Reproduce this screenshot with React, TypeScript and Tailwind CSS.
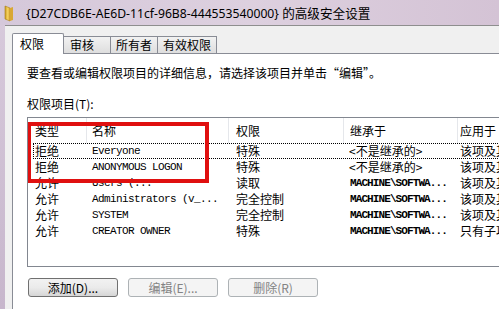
import React from "react";

const cjk = { fontFamily: '"Noto Sans CJK SC", "Noto Sans", sans-serif' };
const mono = { fontFamily: '"Liberation Mono", "Noto Sans CJK SC", monospace' };

type Row = { type: string; name: string; perm: string; inh: string; apply: string; mach?: boolean };

const rows: Row[] = [
  { type: "拒绝", name: "Everyone", perm: "特殊", inh: "<不是继承的>", apply: "该项及其子项" },
  { type: "拒绝", name: "ANONYMOUS LOGON", perm: "特殊", inh: "<不是继承的>", apply: "该项及其子项" },
  { type: "允许", name: "Users (...", perm: "读取", inh: "MACHINE\\SOFTWA...", apply: "该项及其子项", mach: true },
  { type: "允许", name: "Administrators (v_...", perm: "完全控制", inh: "MACHINE\\SOFTWA...", apply: "该项及其子项", mach: true },
  { type: "允许", name: "SYSTEM", perm: "完全控制", inh: "MACHINE\\SOFTWA...", apply: "该项及其子项", mach: true },
  { type: "允许", name: "CREATOR OWNER", perm: "特殊", inh: "MACHINE\\SOFTWA...", apply: "只有子项", mach: true },
];

function Folder() {
  return (
    <svg width="12" height="18" viewBox="0 0 12 18" className="shrink-0">
      <defs>
        <linearGradient id="fg" x1="0" y1="0" x2="1" y2="0">
          <stop offset="0" stopColor="#c89a22" />
          <stop offset="0.5" stopColor="#f3cf5c" />
          <stop offset="1" stopColor="#e0b03a" />
        </linearGradient>
      </defs>
      <path d="M2 2 L7 4 L7 17 L2 15 Z" fill="url(#fg)" stroke="#a77d14" strokeWidth="0.6" />
      <path d="M7 4 L10 3 L10 16 L7 17 Z" fill="#d9a834" />
    </svg>
  );
}

export default function App() {
  return (
    <div className="w-[499px] h-[309px] overflow-hidden flex flex-col bg-gradient-to-b from-[#d8cbdc] to-[#c7b6cc]">
      <div className="h-[25px] shrink-0 flex items-center pl-[3px] bg-gradient-to-r from-[#d5c8da] via-[#ddd0df] to-[#d4c3d5]">
        <Folder />
        <span className="ml-[11px] text-[12.2px] leading-[16px] text-black mt-[2px] whitespace-nowrap" style={{ fontFamily: '"Noto Sans", "Noto Sans CJK SC", sans-serif' }}>
          {"{D27CDB6E-AE6D-11cf-96B8-444553540000} "}
          <span className="text-[12.6px]" style={cjk}>的高级安全设置</span>
        </span>
      </div>
      <div className="flex-1 ml-[5px] bg-[#f0f0f0] border-t border-[#8e8e8e] pl-[7px] pt-[7px] flex flex-col">
        <div className="h-[20px] flex items-end shrink-0 text-[12px] text-black" style={cjk}>
          <div className="relative z-10 w-[52px] h-[21px] -mb-px bg-white border border-b-0 border-[#898c95] rounded-t-[2px] pl-[7px] leading-[20px]">权限</div>
          <div className="w-[48px] h-[17px] -ml-px border border-b-0 border-[#898c95] bg-gradient-to-b from-[#f2f2f2] to-[#dedede] pl-[6px] leading-[16px]">审核</div>
          <div className="w-[48px] h-[17px] -ml-px border border-b-0 border-[#898c95] bg-gradient-to-b from-[#f2f2f2] to-[#dedede] pl-[5px] leading-[16px]">所有者</div>
          <div className="w-[60px] h-[17px] -ml-px border border-b-0 border-[#898c95] bg-gradient-to-b from-[#f2f2f2] to-[#dedede] pl-[5px] leading-[16px]">有效权限</div>
        </div>
        <div className="flex-1 bg-white border border-r-0 border-b-0 border-[#898c95] pl-[14px] pt-[11px] flex flex-col text-[12px] text-black" style={cjk}>
          <div className="leading-[16px] whitespace-nowrap">要查看或编辑权限项目的详细信息，请选择该项目并单击“编辑”。</div>
          <div className="leading-[16px] mt-[15px] whitespace-nowrap">权限项目(T):</div>
          <div className="relative mt-[5px] w-[490px] h-[150px] border border-[#828790] shrink-0 overflow-hidden">
            <div className="h-[25px] flex items-center text-[12px] whitespace-nowrap">
              <div className="w-[59px] shrink-0 h-full pl-[7px] flex items-center border-r border-[#e5e7eb]">类型</div>
              <div className="w-[142px] shrink-0 h-full pl-[5px] flex items-center border-r border-[#e5e7eb]">名称</div>
              <div className="w-[115px] shrink-0 h-full pl-[7px] flex items-center border-r border-[#e5e7eb]">权限</div>
              <div className="w-[114px] shrink-0 h-full pl-[6px] flex items-center border-r border-[#e5e7eb]">继承于</div>
              <div className="shrink-0 h-full pl-[2px] flex items-center">应用于</div>
            </div>
            {rows.map((r, i) => (
              <div
                key={i}
                className={`ml-[5px] h-[16px] flex items-center whitespace-nowrap ${i === 0 ? "border border-dotted border-black" : "border border-transparent"}`}
              >
                <div className="w-[53px] shrink-0 pl-[1px] leading-[14px]">{r.type}</div>
                <div className="w-[142px] shrink-0 pl-[5px] text-[11px] tracking-[-0.6px] leading-[14px]" style={mono}>{r.name}</div>
                <div className="w-[115px] shrink-0 pl-[7px] leading-[14px]">{r.perm}</div>
                {r.mach ? (
                  <div className="w-[114px] shrink-0 pl-[6px] text-[11px] font-bold tracking-[-0.9px] leading-[14px]" style={mono}>{r.inh}</div>
                ) : (
                  <div className="w-[114px] shrink-0 pl-[5px] leading-[14px]">{r.inh}</div>
                )}
                <div className="shrink-0 pl-[2px] leading-[14px]">{r.apply}</div>
              </div>
            ))}
            <div className="absolute left-[-1px] top-[4px] w-[182px] h-[61px] border-[4px] border-[#e01010]" />
          </div>
          <div className="mt-[11px] flex gap-[10px] shrink-0 pl-[1px]">
            <div className="w-[90px] h-[19px] rounded-[3px] border border-[#707070] bg-gradient-to-b from-[#f2f2f2] via-[#ebebeb] to-[#d6d6d6] flex items-center justify-center leading-[16px]">添加(D)...</div>
            <div className="w-[90px] h-[19px] rounded-[3px] border border-[#adb2b5] bg-[#f4f4f4] text-[#838383] flex items-center justify-center leading-[16px]">编辑(E)...</div>
            <div className="w-[90px] h-[19px] rounded-[3px] border border-[#adb2b5] bg-[#f4f4f4] text-[#838383] flex items-center justify-center leading-[16px]">删除(R)</div>
          </div>
        </div>
      </div>
    </div>
  );
}
